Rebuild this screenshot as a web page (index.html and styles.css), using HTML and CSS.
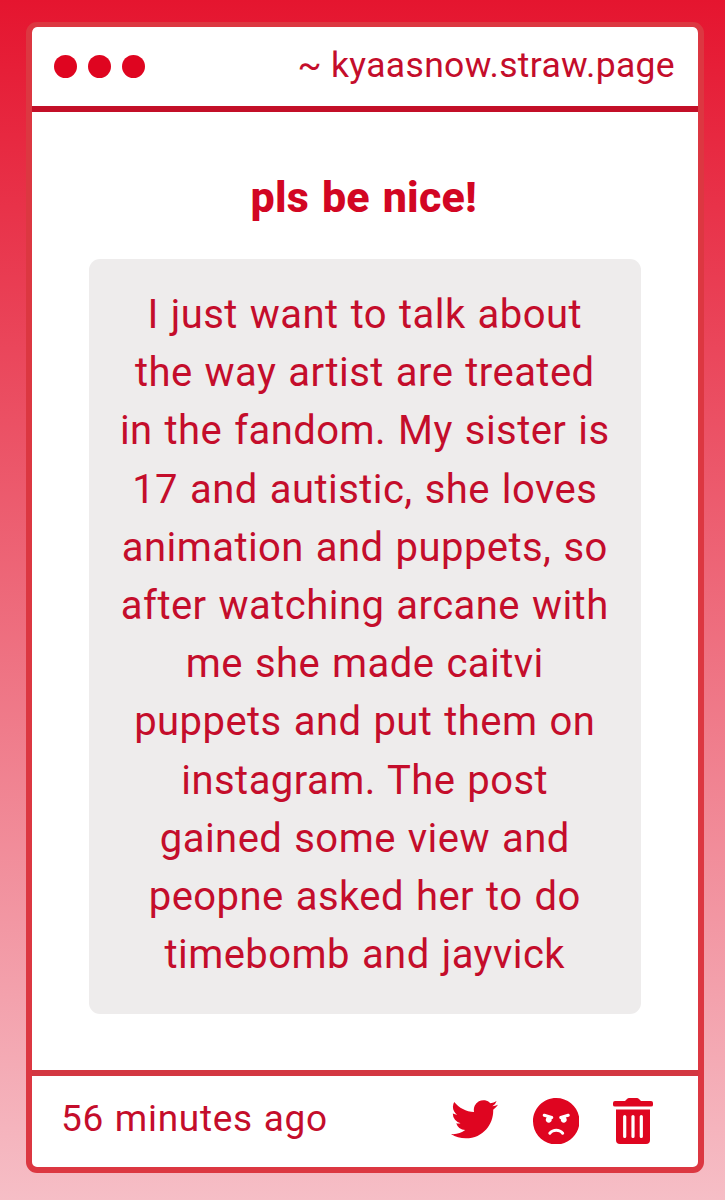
FILE: index.html
```html
<!DOCTYPE html>
<html lang="en">
<head>
  <meta charset="UTF-8" />
  <meta name="viewport" content="width=device-width,initial-scale=1" />
  <title>kyaasnow.straw.page</title>
  <link rel="stylesheet" href="styles.css">
</head>

<body>
  <div class="card">
    <header>
      <div class="dots">
        <span></span>
        <span></span>
        <span></span>
      </div>
      <p class="site">~ kyaasnow.straw.page</p>
    </header>

    <main>
      <h1>pls be nice!</h1>
      <div class="message">
        I just want to talk about<br>
        the way artist are treated<br>
        in the fandom. My sister is<br>
        17 and autistic, she loves<br>
        animation and puppets, so<br>
        after watching arcane with<br>
        me she made caitvi<br>
        puppets and put them on<br>
        instagram. The post<br>
        gained some view and<br>
        peopne asked her to do<br>
        timebomb and jayvick
      </div>
    </main>

    <footer>
      <p class="time">56 minutes ago</p>
      <div class="actions">
        <svg class="twitter" viewBox="0 2.2 24 19.6"><path d="M23.953 4.57a10 10 0 01-2.825.775 4.958 4.958 0 002.163-2.723c-.951.555-2.005.959-3.127 1.184a4.92 4.92 0 00-8.384 4.482C7.69 8.095 4.067 6.13 1.64 3.162a4.822 4.822 0 00-.666 2.475c0 1.71.87 3.213 2.188 4.096a4.904 4.904 0 01-2.228-.616v.06a4.923 4.923 0 003.946 4.827 4.996 4.996 0 01-2.212.085 4.936 4.936 0 004.604 3.417 9.867 9.867 0 01-6.102 2.105c-.39 0-.779-.023-1.17-.067a13.995 13.995 0 007.557 2.209c9.053 0 13.998-7.496 13.998-13.985 0-.21 0-.42-.015-.63A9.935 9.935 0 0024 4.59z"/></svg>
        <svg class="angry" viewBox="0 8 496 496"><path d="M248 8C111 8 0 119 0 256s111 248 248 248 248-111 248-248S385 8 248 8zM136 240c0-9.300 4.100-17.500 10.500-23.400l-31-9.300c-8.500-2.500-13.300-11.500-10.700-19.900 2.500-8.500 11.400-13.200 19.900-10.700l80 24c8.500 2.500 13.300 11.500 10.700 19.900-2.100 6.900-8.400 11.400-15.300 11.400-.5 0-1.100-.2-1.700-.2.7 2.700 1.700 5.300 1.700 8.200 0 17.700-14.300 32-32 32S136 257.700 136 240zm168 154.200c-27.800-33.400-84.200-33.400-112.100 0-13.500 16.300-38.200-4.200-24.600-20.500 20-24 49.400-37.600 80.600-37.600s60.600 13.800 80.600 37.600c13.800 16.500-11.100 36.600-24.500 20.500zm76.600-186.900l-31 9.300c6.300 5.800 10.500 14.100 10.500 23.400 0 17.700-14.300 32-32 32s-32-14.300-32-32c0-2.900.9-5.600 1.700-8.200-.6.1-1.100.2-1.700.2-6.900 0-13.200-4.500-15.300-11.400-2.500-8.500 2.300-17.400 10.700-19.900l80-24c8.400-2.500 17.400 2.300 19.900 10.700 2.500 8.500-2.300 17.400-10.800 19.900z"/></svg>
        <svg class="trash" viewBox="0 0 40 46">
          <path d="M2 3h10l2-2q1-1 2-1h8q1 0 2 1l2 2h10q2 0 2 2v2q0 1.500-2 1.500H2Q0 8.500 0 7V5q0-2 2-2z"/>
          <path d="M3 11.500h34V42q0 4-4 4H7q-4 0-4-4z"/>
          <path class="slats" d="M11.700 18.500v20M20 18.500v20M28.300 18.500v20"/>
        </svg>
      </div>
    </footer>
  </div>
</body>
</html>
```

FILE: styles.css
```css
:root {
  --red: #df0520;
  --text: #c40d2b;
  --border: #dc3741;
  --box: #eeecec;
}

*, *::before, *::after {
  box-sizing: border-box;
}
body {
  margin: 0;
  height: 1200px;
  padding: 22px 21.5px 27.5px 26px;
  font-family: Roboto, sans-serif;
  font-weight: 450;
  color: var(--text);
  background: linear-gradient(#e5152f, #f6bec6);
}
p, h1 {
  margin: 0;
}

.card {
  display: flex;
  flex-direction: column;
  height: 1150.5px;
  background: #fff;
  border: 6px solid var(--border);
  border-top-width: 5px;
  border-radius: 11px;
}

header {
  display: flex;
  align-items: center;
  justify-content: space-between;
  height: 85px;
  padding: 0 22.5px 0 22px;
  border-bottom: 6px solid #c30f28;
}
.dots {
  display: flex;
  gap: 11px;
}
.dots span {
  width: 23px;
  height: 23px;
  border-radius: 50%;
  background: var(--red);
}
.site {
  padding-bottom: 4px;
  font-size: 35.5px;
  line-height: 40px;
  letter-spacing: 0.33px;
}

main {
  flex: 1;
  padding: 57px 56.5px 0;
  text-align: center;
}
h1 {
  padding-right: 2px;
  font-size: 43px;
  font-weight: 800;
  line-height: 56px;
  letter-spacing: 0.2px;
  word-spacing: 2px;
  color: #d20623;
}
.message {
  height: 755px;
  margin-top: 34px;
  padding-top: 27px;
  font-size: 40px;
  line-height: 58.2px;
  letter-spacing: 0.45px;
  word-spacing: 1.6px;
  white-space: nowrap;
  background: var(--box);
  border-radius: 11px;
}

footer {
  display: flex;
  align-items: center;
  justify-content: space-between;
  height: 97px;
  padding: 0 44.5px 0 29px;
  border-top: 6px solid #d33842;
}
.time {
  padding-bottom: 5px;
  font-size: 37px;
  line-height: 44px;
  letter-spacing: 0.7px;
  word-spacing: 1px;
}
.actions {
  display: flex;
  align-items: center;
  gap: 34px;
  fill: var(--red);
}
.twitter {
  width: 47px;
  height: 38.5px;
  margin: 0 0.5px 3px 0;
}
.angry {
  width: 46.5px;
  height: 46.5px;
}
.trash {
  width: 40px;
  height: 46px;
}
.slats {
  stroke: #fff;
  stroke-width: 3.2;
  stroke-linecap: round;
}
```
